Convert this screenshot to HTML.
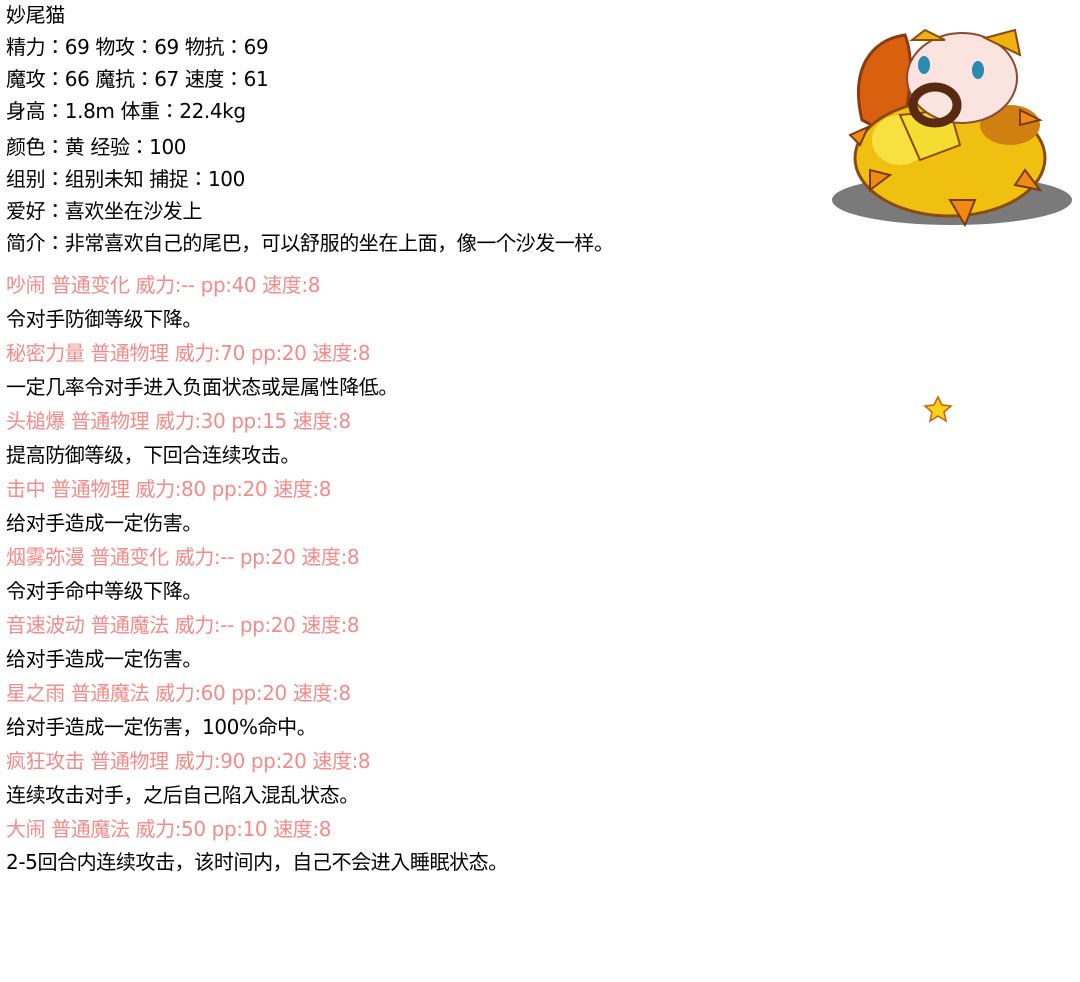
<!DOCTYPE html>
<html><head><meta charset="utf-8"><style>
body{margin:0;width:1080px;height:982px;background:#fff;position:relative;overflow:hidden;font-family:"DejaVu Sans","Noto Sans CJK JP",sans-serif;font-size:20px;letter-spacing:-0.4px;color:#000}
.l{position:absolute;left:6px;line-height:24px;white-space:nowrap}
.p{color:#f58a8a}
</style></head><body>
<div class="l" style="top:3px">妙尾猫</div>
<div class="l" style="top:35px">精力：69 物攻：69 物抗：69</div>
<div class="l" style="top:67px">魔攻：66 魔抗：67 速度：61</div>
<div class="l" style="top:99px">身高：1.8m 体重：22.4kg</div>
<div class="l" style="top:135px">颜色：黄 经验：100</div>
<div class="l" style="top:167px">组别：组别未知 捕捉：100</div>
<div class="l" style="top:199px">爱好：喜欢坐在沙发上</div>
<div class="l" style="top:231px">简介：非常喜欢自己的尾巴，可以舒服的坐在上面，像一个沙发一样。</div>
<div class="l p" style="top:273px">吵闹 普通变化 威力:-- pp:40 速度:8</div>
<div class="l" style="top:307px">令对手防御等级下降。</div>
<div class="l p" style="top:341px">秘密力量 普通物理 威力:70 pp:20 速度:8</div>
<div class="l" style="top:375px">一定几率令对手进入负面状态或是属性降低。</div>
<div class="l p" style="top:409px">头槌爆 普通物理 威力:30 pp:15 速度:8</div>
<div class="l" style="top:443px">提高防御等级，下回合连续攻击。</div>
<div class="l p" style="top:477px">击中 普通物理 威力:80 pp:20 速度:8</div>
<div class="l" style="top:511px">给对手造成一定伤害。</div>
<div class="l p" style="top:545px">烟雾弥漫 普通变化 威力:-- pp:20 速度:8</div>
<div class="l" style="top:579px">令对手命中等级下降。</div>
<div class="l p" style="top:613px">音速波动 普通魔法 威力:-- pp:20 速度:8</div>
<div class="l" style="top:647px">给对手造成一定伤害。</div>
<div class="l p" style="top:681px">星之雨 普通魔法 威力:60 pp:20 速度:8</div>
<div class="l" style="top:715px">给对手造成一定伤害，100%命中。</div>
<div class="l p" style="top:749px">疯狂攻击 普通物理 威力:90 pp:20 速度:8</div>
<div class="l" style="top:783px">连续攻击对手，之后自己陷入混乱状态。</div>
<div class="l p" style="top:817px">大闹 普通魔法 威力:50 pp:10 速度:8</div>
<div class="l" style="top:850px">2-5回合内连续攻击，该时间内，自己不会进入睡眠状态。</div>
<svg style="position:absolute;left:0;top:0" width="1080" height="982">
<ellipse cx="952" cy="200" rx="120" ry="25" fill="#7a7a7a"/>
<path d="M862 120 C850 70 870 40 905 35 C915 60 910 100 900 140 Z" fill="#d9600f" stroke="#8a3a10" stroke-width="3"/>
<ellipse cx="950" cy="158" rx="95" ry="58" fill="#f0c010" stroke="#8a4a10" stroke-width="3"/>
<ellipse cx="900" cy="140" rx="28" ry="25" fill="#f8e040"/>
<ellipse cx="1010" cy="125" rx="30" ry="20" fill="#d08010"/>
<path d="M900 115 L950 110 L960 145 L920 160 Z" fill="#f5dc30" stroke="#8a4a10" stroke-width="2"/>
<ellipse cx="962" cy="78" rx="55" ry="45" fill="#fbe4e0" stroke="#8a4a30" stroke-width="2"/>
<path d="M912 40 L925 30 L945 40 Z M985 38 L1015 30 L1020 55 Z" fill="#f0b010" stroke="#8a4a10" stroke-width="2"/>
<ellipse cx="924" cy="65" rx="6" ry="9" fill="#2a8ab0"/>
<ellipse cx="978" cy="70" rx="6" ry="9" fill="#2a8ab0"/>
<ellipse cx="935" cy="105" rx="22" ry="18" fill="none" stroke="#5a2a10" stroke-width="9"/>
<path d="M850 135 l18 -8 l-8 18 Z M1015 185 l25 5 l-15 -20 Z M870 190 l20 -15 l-20 -5 Z M950 200 l15 25 l10 -25 Z M1020 110 l20 10 l-20 5 Z" fill="#f08a10" stroke="#7a3a10" stroke-width="2"/>
<path d="M938 397 l4 8 9 1 -7 6 2 9 -8 -5 -8 5 2 -9 -7 -6 9 -1 Z" fill="#ffd21a" stroke="#c8600a" stroke-width="1.5"/>
</svg>
</body></html>
